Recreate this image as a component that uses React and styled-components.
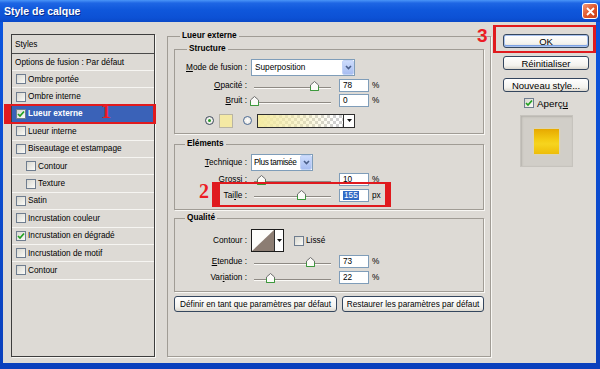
import React from "react";
import styled, { createGlobalStyle } from "styled-components";

const BG = "#dddad5";

const GlobalStyle = createGlobalStyle`
  html, body { margin: 0; padding: 0; }
  body {
    width: 600px; height: 369px; overflow: hidden; background: ${BG};
    font-family: "Liberation Sans", Arial, sans-serif; font-size: 8.25px; color: #000;
  }
  * { box-sizing: border-box; }
`;

const Window = styled.div`
  position: relative;
  width: 600px;
  height: 369px;
  display: flex;
  flex-direction: column;
  background: linear-gradient(#0b56e0, #0a40bd);
`;

const TitleBar = styled.div`
  height: 22px;
  flex: none;
  display: flex;
  align-items: center;
  justify-content: space-between;
  padding: 0 2px 0 4px;
  background: linear-gradient(#4a95f8 0%, #1e66e4 14%, #0f57db 45%, #0c51d5 80%, #0a49c8 100%);
`;

const Title = styled.span`
  color: #fff;
  font-weight: bold;
  font-size: 10.5px;
  text-shadow: 1px 1px 0 #0b2f8c;
`;

const Close = styled.span`
  width: 16px;
  height: 16px;
  border: 1px solid #fff;
  border-radius: 3px;
  background: linear-gradient(135deg, #f29a78, #de5227 55%, #c83c18);
  display: flex;
  align-items: center;
  justify-content: center;
`;

const Body = styled.div`
  flex: 1;
  min-height: 0;
  margin: 0 4px 6px 3px;
  background: ${BG};
  display: grid;
  grid-template-columns: 144px 324px 86px;
  column-gap: 12px;
  padding: 12px 0 6px 8px;
`;

/* ---------- left styles list ---------- */

const Panel = styled.div`
  border: 1px solid #3d3d3d;
  box-shadow: 1px 1px 0 #f7f6f3;
  display: flex;
  flex-direction: column;
`;

const PanelHead = styled.div`
  height: 19px;
  flex: none;
  display: flex;
  align-items: center;
  padding-left: 3px;
  border-bottom: 1px solid #4a4a4a;
`;

const OptionsRow = styled.div`
  height: 17px;
  flex: none;
  display: flex;
  align-items: center;
  padding-left: 3px;
  border-bottom: 1px solid #f6f5f2;
`;

const StyleRow = styled.div`
  height: 17.4px;
  flex: none;
  display: flex;
  align-items: center;
  gap: 2px;
  padding-left: ${p => (p.sub ? 14 : 4)}px;
  border-bottom: 1px solid #f6f5f2;
  background: ${p => (p.active ? "#3a62b8" : "transparent")};
  color: ${p => (p.active ? "#fff" : "#000")};
  font-weight: ${p => (p.active ? "bold" : "normal")};
`;

const Box = styled.span`
  width: 10px;
  height: 10px;
  flex: none;
  border: 1px solid #6f7d8f;
  background: linear-gradient(135deg, #d8d7d0, #fbfbf8);
  display: inline-flex;
  align-items: center;
  justify-content: center;
`;

const CheckBox = ({ on }) => (
  <Box>
    {on && (
      <svg width="8" height="8" viewBox="0 0 8 8">
        <path d="M1 4 L3 6 L7 1.5" fill="none" stroke="#21a121" strokeWidth="1.7" />
      </svg>
    )}
  </Box>
);

const styleItems = [
  { label: "Ombre portée" },
  { label: "Ombre interne" },
  { label: "Lueur externe", on: true, active: true },
  { label: "Lueur interne" },
  { label: "Biseautage et estampage" },
  { label: "Contour", sub: true },
  { label: "Texture", sub: true },
  { label: "Satin" },
  { label: "Incrustation couleur" },
  { label: "Incrustation en dégradé", on: true },
  { label: "Incrustation de motif" },
  { label: "Contour" },
];

/* ---------- middle group boxes ---------- */

const Group = styled.fieldset`
  margin: ${p => p.mt || 0}px 0 0;
  min-width: 0;
  padding: ${p => p.pt || 0}px 0 ${p => p.pb || 0}px;
  border: 1px solid #a09c95;
  box-shadow: 1px 1px 0 #f8f7f4;
  display: flex;
  flex-direction: column;
`;

const Frame = styled(Group)`
  margin-top: -3px;
  padding: 3px 6px 0;
`;

const Legend = styled.legend`
  margin-left: ${p => p.indent}px;
  padding: 0 2px;
  height: 10px;
  line-height: 10px;
  font-weight: bold;
`;

const Row = styled.div`
  height: ${p => p.h}px;
  flex: none;
  display: grid;
  grid-template-columns: 72px 1fr;
  column-gap: 4px;
  align-items: center;
`;

const Label = styled.span`
  text-align: right;
  white-space: nowrap;
`;

const Ctl = styled.div`
  display: flex;
  align-items: center;
`;

const Combo = styled.div`
  width: ${p => p.w}px;
  height: 17px;
  border: 1px solid #7f9db9;
  background: #fff;
  display: flex;
  align-items: center;
  justify-content: space-between;
  padding: 0 0 0 ${p => (p.tight ? 2 : 3)}px;
  white-space: nowrap;
  overflow: hidden;
`;

const ComboText = styled.span`
  letter-spacing: ${p => (p.tight ? -0.4 : 0)}px;
`;

const ComboBtn = styled.span`
  width: 12px;
  height: 15px;
  flex: none;
  border: 1px solid #c3d3f6;
  border-radius: 2px;
  background: linear-gradient(#cddcfc, #a7bdf1);
  display: flex;
  align-items: center;
  justify-content: center;
`;

const Select = ({ w, tight, children }) => (
  <Combo w={w} tight={tight}>
    <ComboText tight={tight}>{children}</ComboText>
    <ComboBtn>
      <svg width="7" height="5" viewBox="0 0 7 5">
        <path d="M1 1 L3.5 3.5 L6 1" fill="none" stroke="#4b5f8a" strokeWidth="1.6" />
      </svg>
    </ComboBtn>
  </Combo>
);

const Track = styled.div`
  position: relative;
  width: 77px;
  height: 10px;
  flex: none;
  margin-left: 3px;
  &::before {
    content: "";
    position: absolute;
    left: 0;
    right: 0;
    top: 6px;
    height: 1px;
    background: #8e8a84;
    box-shadow: 0 1px 0 #fbfaf7;
  }
`;

const ThumbSvg = styled.svg`
  position: absolute;
  top: 0;
`;

const Field = styled.div`
  width: 30px;
  height: 13px;
  margin-left: 8px;
  border: 1px solid #7f9db9;
  background: #fff;
  display: flex;
  align-items: center;
  padding-left: 3px;
`;

const Picked = styled.span`
  background: #316ac5;
  color: #fff;
  padding: 0 1px;
`;

const Unit = styled.span`
  margin-left: 3px;
`;

const SliderRow = ({ h, label, value, max = 100, unit = "%", picked }) => (
  <Row h={h}>
    <Label>{label}</Label>
    <Ctl>
      <Track>
        <ThumbSvg width="9" height="10" viewBox="0 0 9 10" style={{ left: (value / max) * 77 - 4.5 }}>
          <path d="M0.5 9.5 V4 L4.5 0.5 L8.5 4 V9.5 Z" fill="#fbfbf8" stroke="#6d6d6d" />
          <path d="M0.5 5.5 V9.5 H8.5 V5.5" fill="none" stroke="#3c9a3c" />
        </ThumbSvg>
      </Track>
      <Field>{picked ? <Picked>{value}</Picked> : value}</Field>
      <Unit>{unit}</Unit>
    </Ctl>
  </Row>
);

const ColorRow = styled.div`
  height: 25px;
  flex: none;
  display: flex;
  align-items: center;
  padding-left: 30px;
`;

const Radio = styled.span`
  width: 9px;
  height: 9px;
  flex: none;
  border-radius: 50%;
  border: 1px solid ${p => (p.on ? "#3d4a5c" : "#4b6a94")};
  background: radial-gradient(#fff, #e2e0da);
  display: flex;
  align-items: center;
  justify-content: center;
  margin-right: 5px;
  &::after {
    content: "";
    width: 3px;
    height: 3px;
    border-radius: 50%;
    background: ${p => (p.on ? "#2a9c2a" : "transparent")};
  }
`;

const ColorChip = styled.span`
  width: 14px;
  height: 14px;
  flex: none;
  margin-right: 10px;
  border: 1px solid #b8b4a4;
  background: #f4e9a4;
`;

const GradBox = styled.div`
  width: 98px;
  height: 14px;
  display: flex;
  border: 1px solid #2e2e2e;
`;

const GradFill = styled.div`
  flex: 1;
  background: linear-gradient(to right, #f4eba3 0%, rgba(244, 235, 163, 0.45) 55%, rgba(244, 235, 163, 0) 90%),
    repeating-conic-gradient(#d0d0d0 0% 25%, #ffffff 0% 50%) 0 0 / 6px 6px;
`;

const DropTab = styled.div`
  width: ${p => p.w || 11}px;
  flex: none;
  border-left: 1px solid #2e2e2e;
  background: #fff;
  display: flex;
  align-items: center;
  justify-content: center;
`;

const Arrow = () => (
  <svg width="5" height="3" viewBox="0 0 5 3">
    <path d="M0 0 H5 L2.5 3 Z" fill="#111" />
  </svg>
);

const CurvePick = styled.div`
  height: 23px;
  display: flex;
  border: 1px solid #1c1c1c;
`;

const Lisse = styled.label`
  display: flex;
  align-items: center;
  gap: 2px;
  margin-left: 10px;
`;

const ButtonRow = styled.div`
  display: flex;
  gap: 5px;
  margin-top: 4px;
`;

const Btn = styled.button`
  width: ${p => (p.w ? `${p.w}px` : "auto")};
  height: ${p => p.h || 14}px;
  padding: 0;
  font-family: "Liberation Sans", Arial, sans-serif;
  font-size: ${p => p.fs || 9.5}px;
  color: #000;
  border: 1px solid #34465e;
  border-radius: 3px;
  background: linear-gradient(#ffffff, #f3f2ee 70%, #dcd8cf);
  box-shadow: ${p => (p.primary ? "inset 0 0 0 1px #a9c2ee, inset 0 -1px 0 1px #7da2e4" : "none")};
`;

/* ---------- right column ---------- */

const Side = styled.div`
  display: flex;
  flex-direction: column;
  gap: 8px;
`;

const Apercu = styled.div`
  display: flex;
  align-items: center;
  justify-content: center;
  gap: 3px;
  height: 10px;
  margin-top: -2px;
  font-size: 9.8px;
`;

const Preview = styled.div`
  width: 53px;
  height: 52px;
  align-self: center;
  margin-top: -1px;
  background: #d1cec8;
  border: 1px solid #c6c3bd;
  box-shadow: inset 1px 1px 2px #b5b2ac;
  display: flex;
  align-items: center;
  justify-content: center;
`;

const Sample = styled.div`
  width: 25px;
  height: 25px;
  background: linear-gradient(#e7a900, #f4cd14 45%, #f6d41e 60%, #eebd08);
  box-shadow: 0 0 2px #f3e08a;
`;

/* ---------- red annotations ---------- */

const Mark = styled.div`
  position: absolute;
  left: ${p => p.x}px;
  top: ${p => p.y}px;
  width: ${p => p.w}px;
  height: ${p => p.h}px;
  border: 2px solid #e01a1e;
  border-left-width: ${p => p.bl}px;
  border-right-width: ${p => p.br}px;
  pointer-events: none;
`;

const Num = styled.span`
  position: absolute;
  z-index: 2;
  left: ${p => p.x}px;
  top: ${p => p.y}px;
  font-family: ${p => (p.serif ? '"Liberation Serif", "Times New Roman", serif' : '"Liberation Sans", Arial, sans-serif')};
  font-size: ${p => p.size}px;
  font-weight: ${p => (p.bold ? "bold" : "normal")};
  line-height: 1;
  color: #ec1c24;
`;

export default function App() {
  return (
    <Window>
      <GlobalStyle />
      <TitleBar>
        <Title>Style de calque</Title>
        <Close>
          <svg width="9" height="9" viewBox="0 0 9 9">
            <path d="M1 1 L8 8 M8 1 L1 8" stroke="#fff" strokeWidth="1.8" />
          </svg>
        </Close>
      </TitleBar>

      <Body>
        <Panel>
          <PanelHead>Styles</PanelHead>
          <OptionsRow>Options de fusion : Par défaut</OptionsRow>
          {styleItems.map((s, i) => (
            <StyleRow key={i} sub={s.sub} active={s.active}>
              <CheckBox on={s.on} />
              {s.label}
            </StyleRow>
          ))}
        </Panel>

        <Frame>
          <Legend indent={6}>Lueur externe</Legend>

          <Group>
            <Legend indent={12}>Structure</Legend>
            <div style={{ height: 3 }} />
            <Row h={21}>
              <Label><u>M</u>ode de fusion :</Label>
              <Ctl><Select w={104}>Superposition</Select></Ctl>
            </Row>
            <SliderRow h={15} label={<><u>O</u>pacité :</>} value={78} />
            <SliderRow h={15} label={<><u>B</u>ruit :</>} value={0} />
            <ColorRow>
              <Radio on />
              <ColorChip />
              <Radio />
              <GradBox>
                <GradFill />
                <DropTab><Arrow /></DropTab>
              </GradBox>
            </ColorRow>
          </Group>

          <Group mt={5} pt={4} pb={6}>
            <Legend indent={10}>Eléments</Legend>
            <Row h={19}>
              <Label><u>T</u>echnique :</Label>
              <Ctl><Select w={62} tight>Plus tamisée</Select></Ctl>
            </Row>
            <SliderRow h={15} label={<><u>G</u>rossi :</>} value={10} />
            <SliderRow h={16} label={<>Tai<u>l</u>le :</>} value={155} max={250} unit="px" picked />
          </Group>

          <Group mt={3} pt={5} pb={6}>
            <Legend indent={10}>Qualité</Legend>
            <Row h={25}>
              <Label>Contour :</Label>
              <Ctl>
                <CurvePick>
                  <svg width="22" height="21" viewBox="0 0 22 21">
                    <rect width="22" height="21" fill="#fdfdfb" />
                    <path d="M0 21 L22 0 V21 Z" fill="#8c7d73" />
                  </svg>
                  <DropTab w={9}><Arrow /></DropTab>
                </CurvePick>
                <Lisse>
                  <CheckBox />
                  Lissé
                </Lisse>
              </Ctl>
            </Row>
            <SliderRow h={17} label={<><u>E</u>tendue :</>} value={73} />
            <SliderRow h={15} label={<>Var<u>i</u>ation :</>} value={22} />
          </Group>

          <ButtonRow>
            <Btn w={163} h={16} fs={8.25}>Définir en tant que paramètres par défaut</Btn>
            <Btn w={142} h={16} fs={8.25}>Restaurer les paramètres par défaut</Btn>
          </ButtonRow>
        </Frame>

        <Side>
          <Btn primary>OK</Btn>
          <Btn>Réinitialiser</Btn>
          <Btn>Nouveau style...</Btn>
          <Apercu>
            <CheckBox on />
            <span>Aperç<u>u</u></span>
          </Apercu>
          <Preview>
            <Sample />
          </Preview>
        </Side>
      </Body>

      <Mark x={4} y={104} w={152} h={20} bl={7} br={3} />
      <Num x={101} y={101} size={20} serif bold>1</Num>
      <Mark x={212} y={182} w={179} h={25} bl={8} br={6} />
      <Num x={199} y={181} size={20} serif bold>2</Num>
      <Mark x={493} y={25} w={103} h={28} bl={3} br={3} />
      <Num x={477} y={26} size={19} bold>3</Num>
    </Window>
  );
}
